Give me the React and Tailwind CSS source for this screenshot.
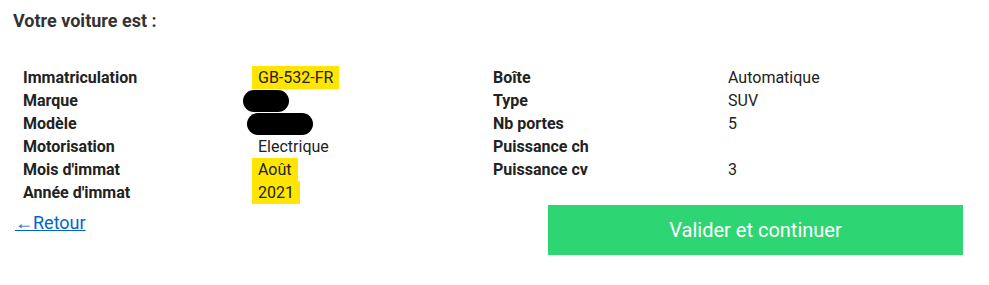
import React from 'react';

const leftRows = [
    { label: 'Immatriculation', value: 'GB-532-FR', mark: true },
    { label: 'Marque', blob: 'w-[46px] ml-[-15px]' },
    { label: 'Modèle', blob: 'w-[66px] ml-[-11px]' },
    { label: 'Motorisation', value: 'Electrique' },
    { label: "Mois d'immat", value: 'Août', mark: true },
    { label: "Année d'immat", value: '2021', mark: true },
];

const rightRows = [
    { label: 'Boîte', value: 'Automatique' },
    { label: 'Type', value: 'SUV' },
    { label: 'Nb portes', value: '5' },
    { label: 'Puissance ch', value: '' },
    { label: 'Puissance cv', value: '3' },
];

const Rows = ({ rows }) => (
    <div className="grid grid-cols-[235px_235px] auto-rows-[23px]">
        {rows.map((row) => (
            <React.Fragment key={row.label}>
                <div className="font-bold text-[#222] leading-[23px]">{row.label}</div>
                <div className="leading-[23px] text-[#222] flex items-center">
                    {row.blob ? (
                        <span className={`block h-[22px] rounded-full bg-black ${row.blob}`}></span>
                    ) : row.mark ? (
                        <span className="bg-[#ffe500] px-[6px] -ml-[6px] h-[23px]">{row.value}</span>
                    ) : (
                        <span>{row.value}</span>
                    )}
                </div>
            </React.Fragment>
        ))}
    </div>
);

export default function App() {
    return (
        <div className="w-[989px] h-[285px] bg-white font-['Roboto',sans-serif] text-[16px] pt-[8px] px-[13px]">
            <h2 className="text-[18px] font-bold text-[#333] leading-[26px]">Votre voiture est :</h2>

            {/* vehicle details */}
            <div className="mt-[32px] ml-[10px] flex">
                <Rows rows={leftRows} />
                <Rows rows={rightRows} />
            </div>

            <div className="flex justify-between items-start mt-[1px] pr-[13px]">
                <a href="#" className="ml-[2px] mt-[5px] text-[18px] leading-[26px] text-[#0066cc] underline">←Retour</a>
                <button className="w-[415px] h-[50px] bg-[#2ed573] text-white text-[20px]">
                    Valider et continuer
                </button>
            </div>
        </div>
    );
}
